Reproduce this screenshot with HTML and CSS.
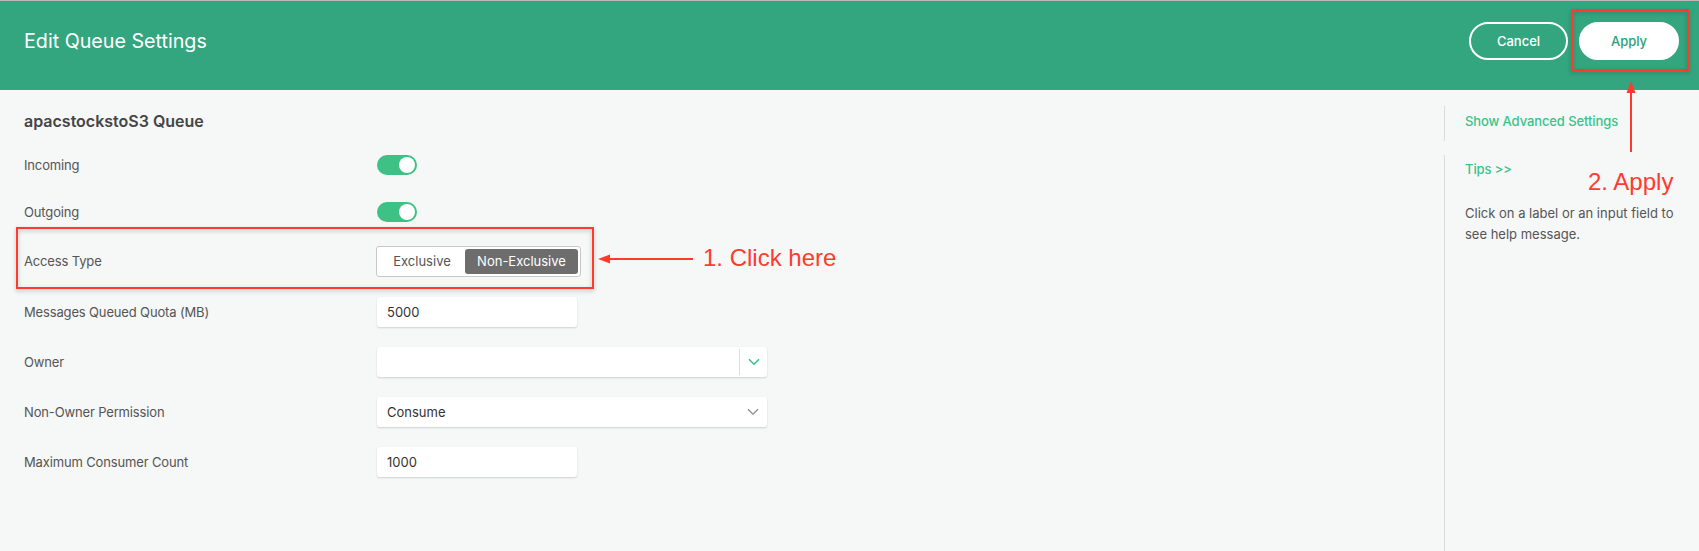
FILE: index.html
```html
<!DOCTYPE html>
<html lang="en">
<head>
<meta charset="utf-8">
<title>Edit Queue Settings</title>
<link rel="stylesheet" href="styles.css">
</head>
<body>
<div class="page">
  <header class="topbar">
    <h1 class="title">Edit Queue Settings</h1>
    <div class="actions">
      <button class="btn btn-outline">Cancel</button>
      <button class="btn btn-solid">Apply</button>
    </div>
  </header>
  <div class="content">
    <main class="form">
      <h2 class="queue-name">apacstockstoS3 Queue</h2>
      <div class="row row-toggle">
        <span class="label">Incoming</span>
        <span class="toggle"><span class="knob"></span></span>
      </div>
      <div class="row row-toggle">
        <span class="label">Outgoing</span>
        <span class="toggle"><span class="knob"></span></span>
      </div>
      <div class="row row-segment">
        <span class="label">Access Type</span>
        <div class="segment">
          <span class="seg-option">Exclusive</span>
          <span class="seg-option seg-active">Non-Exclusive</span>
        </div>
      </div>
      <div class="row">
        <span class="label">Messages Queued Quota (MB)</span>
        <div class="field field-short">5000</div>
      </div>
      <div class="row">
        <span class="label">Owner</span>
        <div class="field field-long select">
          <span class="select-value"></span>
          <span class="select-divider"></span>
          <span class="select-arrow arrow-green">
            <svg width="12" height="8" viewBox="0 0 12 8"><path d="M1 1.2 L6 6.2 L11 1.2" fill="none" stroke="currentColor" stroke-width="1.6"/></svg>
          </span>
        </div>
      </div>
      <div class="row">
        <span class="label">Non-Owner Permission</span>
        <div class="field field-long select">
          <span class="select-value">Consume</span>
          <span class="select-arrow arrow-grey">
            <svg width="12" height="8" viewBox="0 0 12 8"><path d="M1 1.2 L6 6.2 L11 1.2" fill="none" stroke="currentColor" stroke-width="1.3"/></svg>
          </span>
        </div>
      </div>
      <div class="row">
        <span class="label">Maximum Consumer Count</span>
        <div class="field field-short">1000</div>
      </div>
    </main>
    <aside class="sidebar">
      <div class="side-block side-top">
        <span class="link">Show Advanced Settings</span>
      </div>
      <div class="side-block side-tips">
        <span class="link">Tips &gt;&gt;</span>
        <p class="help">Click on a label or an input field to see help message.</p>
      </div>
    </aside>
  </div>

  <div class="annotations">
    <svg class="anno-svg" width="1699" height="551" viewBox="0 0 1699 551">
      <rect x="17" y="228" width="576" height="60" fill="none" stroke="#ff3b2f" stroke-width="2" class="anno-box"/>
      <rect x="1572" y="10" width="116" height="60" fill="none" stroke="#ff3b2f" stroke-width="2" class="anno-box"/>
      <line x1="693" y1="259" x2="606" y2="259" stroke="#ff3b2f" stroke-width="2"/>
      <polygon points="598,259 610,254.5 610,263.5" fill="#ff3b2f"/>
      <line x1="1631" y1="152" x2="1631" y2="89" stroke="#ff3b2f" stroke-width="2"/>
      <polygon points="1631,81 1626.5,93 1635.5,93" fill="#ff3b2f"/>
    </svg>
    <div class="anno-text anno-1">1. Click here</div>
    <div class="anno-text anno-2">2. Apply</div>
  </div>
</div>
</body>
</html>
```

FILE: styles.css
```css
* { box-sizing: border-box; }
html, body { margin: 0; padding: 0; }
body {
  background: #f6f7f7;
  font-family: "Inter", "Open Sans", sans-serif;
  color: #505050;
}
.page {
  position: relative;
  min-height: 100vh;
  display: flex;
  flex-direction: column;
}
.topbar {
  height: 90px;
  border-top: 1px solid #b9b9b9;
  background: #34a67f;
  display: flex;
  align-items: center;
  justify-content: space-between;
  padding: 0 20px 10px 24px;
}
.title {
  margin: 0;
  font-size: 19.7px;
  font-weight: 400;
  color: #ffffff;
}
.actions {
  display: flex;
  gap: 11px;
}
.btn {
  width: 100px;
  height: 38px;
  border-radius: 19px;
  font-family: "Inter", sans-serif;
  font-size: 13px;
  font-weight: 500;
  cursor: pointer;
}
.btn-outline {
  background: transparent;
  border: 2px solid #ffffff;
  color: #ffffff;
  width: 99px;
}
.btn-solid {
  background: #ffffff;
  border: 2px solid #ffffff;
  color: #2f9f78;
}
.content {
  flex: 1;
  display: flex;
}
.form {
  flex: 1;
  padding: 20px 0 0 24px;
}
.queue-name {
  margin: 0 0 9px 0;
  height: 22px;
  line-height: 22px;
  font-size: 16px;
  font-weight: 600;
  color: #454545;
}
.row {
  display: grid;
  grid-template-columns: 353px 1fr;
  align-items: center;
  height: 50px;
}
.row-toggle { height: 47px; }
.row-segment { height: 52px; }
.label {
  font-size: 13px;
  letter-spacing: -0.15px;
  color: #555555;
}
.toggle {
  position: relative;
  display: block;
  width: 40px;
  height: 20px;
  border-radius: 10px;
  background: #3ec184;
}
.knob {
  position: absolute;
  top: 2px;
  right: 2px;
  width: 16px;
  height: 16px;
  border-radius: 50%;
  background: #ffffff;
}
.segment {
  width: 205px;
  height: 31px;
  margin-left: -1px;
  border: 1px solid #c8c8c8;
  border-radius: 3px;
  background: #ffffff;
  padding: 2px;
  display: flex;
}
.seg-option {
  flex: 1;
  display: flex;
  align-items: center;
  justify-content: center;
  font-size: 13px;
  color: #555555;
}
.seg-active {
  flex: 0 0 113px;
  background: #6d6d6d;
  color: #ffffff;
  border-radius: 3px;
}
.field {
  height: 30px;
  background: #ffffff;
  border-radius: 3px;
  box-shadow: 0 1px 2px rgba(0,0,0,0.16);
  display: flex;
  align-items: center;
  padding-left: 10px;
  font-size: 13px;
  color: #333333;
}
.field-short { width: 200px; }
.field-long { width: 390px; }
.select { padding-right: 0; }
.select-value { flex: 1; }
.select-divider {
  width: 1px;
  height: 26px;
  background: #dddddd;
}
.select-arrow {
  width: 27px;
  display: flex;
  align-items: center;
  justify-content: center;
}
.arrow-green { color: #3bbf8a; }
.arrow-grey { color: #8c8c8c; width: 28px; }
.sidebar {
  width: 255px;
  display: flex;
  flex-direction: column;
  gap: 14px;
  padding-top: 16px;
}
.side-block {
  border-left: 1px solid #dcdcdc;
  padding-left: 20px;
}
.side-top {
  height: 35px;
  display: flex;
  align-items: center;
  padding-bottom: 6px;
}
.side-tips {
  flex: 1;
  padding-top: 4px;
  padding-right: 24px;
}
.link {
  display: block;
  font-size: 13px;
  font-weight: 500;
  letter-spacing: -0.1px;
  color: #3ac48b;
  line-height: 20px;
}
.help {
  margin: 24px 0 0 0;
  font-size: 13px;
  line-height: 21px;
  color: #555555;
}
.annotations {
  position: absolute;
  left: 0;
  top: 0;
  width: 1699px;
  height: 551px;
  pointer-events: none;
}
.anno-svg {
  position: absolute;
  left: 0;
  top: 0;
}
.anno-box { filter: drop-shadow(0 2px 2px rgba(0,0,0,0.25)); }
.anno-text {
  position: absolute;
  font-family: "Liberation Sans", Arial, sans-serif;
  font-size: 24px;
  line-height: 28px;
  color: #ff3b2f;
  white-space: nowrap;
}
.anno-1 { left: 703px; top: 244px; }
.anno-2 { left: 1588px; top: 168px; }
```
